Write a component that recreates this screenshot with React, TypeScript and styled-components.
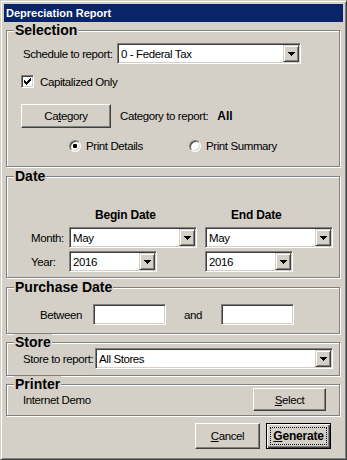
import React from "react";
import styled, { createGlobalStyle, css } from "styled-components";

const FACE = "#d4d0c8";
const SHADOW = "#808080";
const DARK = "#404040";
const UI = `"Liberation Sans", Arial, sans-serif`;
const SANS = `"Liberation Sans", Arial, sans-serif`;

const Global = createGlobalStyle`
  html, body { margin: 0; padding: 0; background: ${FACE}; }
  body { font-family: ${UI}; font-size: 11.5px; letter-spacing: -0.4px; color: #000; }
  * { box-sizing: border-box; }
`;

const Window = styled.div`
  width: 347px;
  height: 460px;
  background: ${FACE};
  border: 1px solid;
  border-color: ${FACE} ${DARK} ${DARK} ${FACE};
  box-shadow: inset 1px 1px 0 #fff, inset -1px -1px 0 ${SHADOW};
  padding: 3px;
  display: flex;
  flex-direction: column;
`;

const TitleBar = styled.div`
  height: 18px;
  background: #0a246a;
  color: #fff;
  font: bold 11px ${SANS};
  letter-spacing: 0;
  display: flex;
  align-items: center;
  padding-left: 2px;
`;

const Group = styled.fieldset<{ $mt?: number }>`
  margin: ${(p) => p.$mt ?? 0}px 3px 0 2px;
  padding: 0;
  border: 1px solid ${SHADOW};
  box-shadow: 1px 1px 0 #fff, inset 1px 1px 0 #fff;
  min-width: 0;
`;

const Legend = styled.legend`
  margin-left: 7px;
  padding: 0 1px;
  background: ${FACE};
  font: bold 14px/16px ${SANS};
  letter-spacing: 0;
`;

const Body = styled.div<{ $pt: number; $pb: number }>`
  display: flex;
  flex-direction: column;
  padding-top: ${(p) => p.$pt}px;
  padding-bottom: ${(p) => p.$pb}px;
`;

const Row = styled.div<{ $pl?: number; $pr?: number; $mt?: number; $h: number; $between?: boolean }>`
  display: flex;
  align-items: center;
  height: ${(p) => p.$h}px;
  margin-top: ${(p) => p.$mt ?? 0}px;
  padding-left: ${(p) => p.$pl ?? 0}px;
  padding-right: ${(p) => p.$pr ?? 0}px;
  justify-content: ${(p) => (p.$between ? "space-between" : "flex-start")};
  white-space: nowrap;
`;

const Label = styled.span<{ $w?: number; $ml?: number; $bold?: boolean }>`
  ${(p) => (p.$w ? css`width: ${p.$w}px; flex: none;` : "")}
  margin-left: ${(p) => p.$ml ?? 0}px;
  ${(p) => (p.$bold ? css`font: bold 12px ${SANS}; letter-spacing: 0;` : "")}
`;

const sunken = css`
  background: #fff;
  border: 1px solid;
  border-color: ${SHADOW} #fff #fff ${SHADOW};
  box-shadow: inset 1px 1px 0 ${DARK}, inset -1px -1px 0 ${FACE};
`;

const ComboBox = styled.div<{ $w: number }>`
  ${sunken};
  width: ${(p) => p.$w}px;
  height: 21px;
  padding: 1px;
  display: flex;
  align-items: stretch;
  flex: none;
`;

const ComboText = styled.span`
  flex: 1;
  padding-left: 2px;
  display: flex;
  align-items: center;
  overflow: hidden;
`;

const DropButton = styled.span`
  width: 16px;
  flex: none;
  background: ${FACE};
  border: 1px solid;
  border-color: ${FACE} ${DARK} ${DARK} ${FACE};
  box-shadow: inset 1px 1px 0 #fff, inset -1px -1px 0 ${SHADOW};
  display: flex;
  align-items: center;
  justify-content: center;
`;

const TextBox = styled.div<{ $w: number }>`
  ${sunken};
  width: ${(p) => p.$w}px;
  height: 21px;
  flex: none;
`;

const CheckBox = styled.span`
  ${sunken};
  width: 13px;
  height: 13px;
  flex: none;
  display: flex;
  align-items: center;
  justify-content: center;
`;

const RadioItem = styled.span<{ $w?: number }>`
  display: flex;
  align-items: center;
  gap: 5px;
  ${(p) => (p.$w ? css`width: ${p.$w}px;` : "")}
`;

const Radio = styled.span<{ $on?: boolean }>`
  width: 12px;
  height: 12px;
  flex: none;
  border-radius: 50%;
  background: #fff;
  border: 1px solid;
  border-color: ${SHADOW} #fff #fff ${SHADOW};
  box-shadow: inset 1px 1px 0 ${DARK}, inset -1px -1px 0 ${FACE};
  display: flex;
  align-items: center;
  justify-content: center;
  &::after {
    content: "";
    width: 4px;
    height: 4px;
    border-radius: 1px;
    background: ${(p) => (p.$on ? "#000" : "transparent")};
  }
`;

const Button = styled.button<{ $w: number; $h: number; $default?: boolean }>`
  width: ${(p) => p.$w}px;
  height: ${(p) => p.$h}px;
  flex: none;
  padding: 0;
  margin: 0;
  background: ${FACE};
  color: #000;
  font: 11.5px ${UI};
  letter-spacing: -0.4px;
  display: flex;
  align-items: stretch;
  justify-content: center;
  border: 1px solid;
  ${(p) =>
    p.$default
      ? css`
          border-color: #000;
          box-shadow: inset 1px 1px 0 #fff, inset -1px -1px 0 ${DARK}, inset -2px -2px 0 ${SHADOW};
          font-weight: bold;
          font-size: 12px;
          letter-spacing: -0.2px;
        `
      : css`
          border-color: #fff ${DARK} ${DARK} #fff;
          box-shadow: inset -1px -1px 0 ${SHADOW};
        `}
`;

const ButtonFace = styled.span<{ $focus?: boolean }>`
  flex: 1;
  display: flex;
  align-items: center;
  justify-content: center;
  margin: 3px;
  border: 1px ${(p) => (p.$focus ? "dotted #000" : "solid transparent")};
`;

const ButtonBar = styled.div`
  display: flex;
  justify-content: flex-end;
  gap: 6px;
  margin-top: 7px;
  padding-right: 12px;
`;

const DateRow = styled.div<{ $mt: number; $h: number }>`
  display: grid;
  grid-template-columns: 30px 128px 128px;
  column-gap: 8px;
  align-items: center;
  height: ${(p) => p.$h}px;
  margin-top: ${(p) => p.$mt}px;
  padding-left: 24px;
  white-space: nowrap;
`;

const ColHead = styled.span`
  font: bold 12px ${SANS};
  letter-spacing: -0.2px;
  padding-left: 26px;
`;

const Arrow = () => (
  <svg width="7" height="4" viewBox="0 0 7 4" shapeRendering="crispEdges">
    <path d="M0 0h7v1H0zM1 1h5v1H1zM2 2h3v1H2zM3 3h1v1H3z" fill="#000" />
  </svg>
);

const Check = () => (
  <svg width="7" height="7" viewBox="0 0 7 7" shapeRendering="crispEdges">
    <path
      d="M0 2h1v3H0zM1 3h1v3H1zM2 4h1v3H2zM3 3h1v3H3zM4 2h1v3H4zM5 1h1v3H5zM6 0h1v3H6z"
      fill="#000"
    />
  </svg>
);

const Combo = ({ w, value }: { w: number; value: string }) => (
  <ComboBox $w={w}>
    <ComboText>{value}</ComboText>
    <DropButton>
      <Arrow />
    </DropButton>
  </ComboBox>
);

export default function App() {
  return (
    <>
      <Global />
      <Window>
        <TitleBar>Depreciation Report</TitleBar>

        <Group>
          <Legend>Selection</Legend>
          <Body $pt={5} $pb={14}>
            <Row $h={21} $pl={16}>
              <Label $w={94}>Schedule to report:</Label>
              <Combo w={184} value="0 - Federal Tax" />
            </Row>
            <Row $h={13} $mt={11} $pl={14}>
              <CheckBox>
                <Check />
              </CheckBox>
              <Label $ml={6}>Capitalized Only</Label>
            </Row>
            <Row $h={24} $mt={16} $pl={14}>
              <Button $w={90} $h={24}>
                <ButtonFace>
                  Ca<u>t</u>egory
                </ButtonFace>
              </Button>
              <Label $ml={9}>Category to report:</Label>
              <Label $ml={9} $bold>
                All
              </Label>
            </Row>
            <Row $h={13} $mt={11} $pl={62}>
              <RadioItem $w={120}>
                <Radio $on />
                Print Details
              </RadioItem>
              <RadioItem>
                <Radio />
                Print Summary
              </RadioItem>
            </Row>
          </Body>
        </Group>

        <Group $mt={1}>
          <Legend>Date</Legend>
          <Body $pt={0} $pb={5}>
            <DateRow $mt={24} $h={14}>
              <span />
              <ColHead>Begin Date</ColHead>
              <ColHead>End Date</ColHead>
            </DateRow>
            <DateRow $mt={5} $h={21}>
              <Label>Month:</Label>
              <Combo w={128} value="May" />
              <Combo w={128} value="May" />
            </DateRow>
            <DateRow $mt={3} $h={21}>
              <Label>Year:</Label>
              <Combo w={88} value="2016" />
              <Combo w={88} value="2016" />
            </DateRow>
          </Body>
        </Group>

        <Group $mt={1}>
          <Legend>Purchase Date</Legend>
          <Body $pt={9} $pb={8}>
            <Row $h={21} $pl={33}>
              <Label $w={53}>Between</Label>
              <TextBox $w={73} />
              <Label $w={37} $ml={18}>
                and
              </Label>
              <TextBox $w={73} />
            </Row>
          </Body>
        </Group>

        <Group>
          <Legend>Store</Legend>
          <Body $pt={0} $pb={6}>
            <Row $h={21} $mt={-2} $pl={16}>
              <Label $w={72}>Store to report:</Label>
              <Combo w={238} value="All Stores" />
            </Row>
          </Body>
        </Group>

        <Group>
          <Legend>Printer</Legend>
          <Body $pt={0} $pb={4}>
            <Row $h={23} $mt={-4} $pl={16} $pr={13} $between>
              <Label>Internet Demo</Label>
              <Button $w={73} $h={23}>
                <ButtonFace>
                  <u>S</u>elect
                </ButtonFace>
              </Button>
            </Row>
          </Body>
        </Group>

        <ButtonBar>
          <Button $w={65} $h={26}>
            <ButtonFace>
              <u>C</u>ancel
            </ButtonFace>
          </Button>
          <Button $w={65} $h={26} $default>
            <ButtonFace $focus>
              <u>G</u>enerate
            </ButtonFace>
          </Button>
        </ButtonBar>
      </Window>
    </>
  );
}
